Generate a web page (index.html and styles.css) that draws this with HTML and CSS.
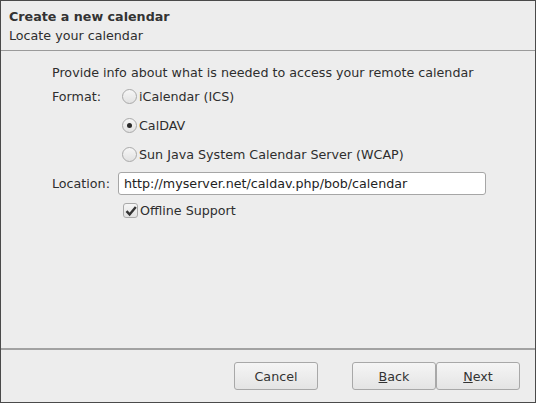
FILE: index.html
```html
<!DOCTYPE html>
<html>
<head>
    <title>Create a new calendar</title>
    <link rel="stylesheet" href="styles.css">
</head>
<body>
    <div class="wizard">
        <div class="wizard-head">
            <div class="wizard-title">Create a new calendar</div>
            <div class="wizard-sub">Locate your calendar</div>
        </div>

        <div class="wizard-body">
            <p class="intro">Provide info about what is needed to access your remote calendar</p>
            <div class="form-grid">
                <span class="label">Format:</span>
                <div class="radios">
                    <label class="radio"><span class="dot"></span>iCalendar (ICS)</label>
                    <label class="radio checked"><span class="dot"></span>CalDAV</label>
                    <label class="radio"><span class="dot"></span>Sun Java System Calendar Server (WCAP)</label>
                </div>
                <span class="label loc-label">Location:</span>
                <input type="text" class="input-field" value="http://myserver.net/caldav.php/bob/calendar">
                <span></span>
                <label class="check">
                    <span class="box">
                        <svg width="12" height="12" viewBox="0 0 12 12"><path d="M1.5 6.2 L4.6 9.4 L10.8 2" fill="none" stroke="#333" stroke-width="2.4"/></svg>
                    </span>Offline Support
                </label>
            </div>
        </div>

        <div class="wizard-foot">
            <button class="btn">Cancel</button>
            <div class="nav-btns">
                <button class="btn"><u>B</u>ack</button>
                <button class="btn"><u>N</u>ext</button>
            </div>
        </div>
    </div>
</body>
</html>
```
FILE: styles.css
```css
* {
    margin: 0;
    padding: 0;
    box-sizing: border-box;
}
body {
    font-family: 'DejaVu Sans', sans-serif;
    font-size: 12.7px;
    color: #2e2e2e;
    background: #ffffff;
}
.wizard {
    width: 536px;
    height: 403px;
    border: 1px solid #4a4a4a;
    background: #ededed;
    display: flex;
    flex-direction: column;
}
.wizard-head {
    height: 50px;
    padding: 7px 0 0 8px;
    border-bottom: 1px solid #9a9a9a;
    line-height: 18px;
}
.wizard-title {
    font-weight: bold;
    color: #333;
}
.wizard-sub {
    margin-top: 1px;
}
.wizard-body {
    flex: 1;
    padding: 14px 0 0 51px;
    border-bottom: 2px solid #a2a2a2;
}
.intro {
    line-height: 16px;
    margin-bottom: 5px;
}
.form-grid {
    display: grid;
    grid-template-columns: 66px 368px;
    row-gap: 9px;
    align-items: start;
}
.label {
    line-height: 16px;
    padding-top: 3px;
}
.loc-label {
    padding-top: 4px;
}
.radios {
    display: flex;
    flex-direction: column;
    gap: 12px;
    padding-top: 2px;
}
.radio, .check {
    display: flex;
    align-items: center;
    gap: 2px;
    line-height: 16px;
    height: 17px;
}
.dot {
    width: 15px;
    height: 15px;
    margin-left: 4px;
    border: 1px solid #a9a9a9;
    border-radius: 50%;
    background: linear-gradient(#f6f6f6, #e2e2e2);
    display: flex;
    align-items: center;
    justify-content: center;
}
.radio.checked .dot::after {
    content: "";
    width: 5px;
    height: 5px;
    border-radius: 50%;
    background: #2a2a2a;
}
.input-field {
    height: 23px;
    border: 1px solid #a6a6a6;
    border-radius: 3px;
    background: #ffffff;
    font-family: inherit;
    font-size: 12.7px;
    color: #222;
    padding: 0 5px;
}
.check {
    margin-top: -2px;
    gap: 2px;
}
.box {
    width: 15px;
    height: 15px;
    margin-left: 5px;
    border: 1px solid #a9a9a9;
    border-radius: 3px;
    background: linear-gradient(#f6f6f6, #e2e2e2);
    display: flex;
    align-items: center;
    justify-content: center;
}
.wizard-foot {
    height: 52px;
    display: flex;
    align-items: flex-start;
    justify-content: flex-end;
    padding: 12px 15px 0 0;
    gap: 34px;
}
.nav-btns {
    display: flex;
}
.btn {
    width: 84px;
    height: 28px;
    border: 1px solid #a8a8a8;
    border-radius: 3px;
    background: linear-gradient(#f5f5f5, #e4e4e4);
    font-family: inherit;
    font-size: 12.7px;
    color: #333;
    cursor: pointer;
}
```
